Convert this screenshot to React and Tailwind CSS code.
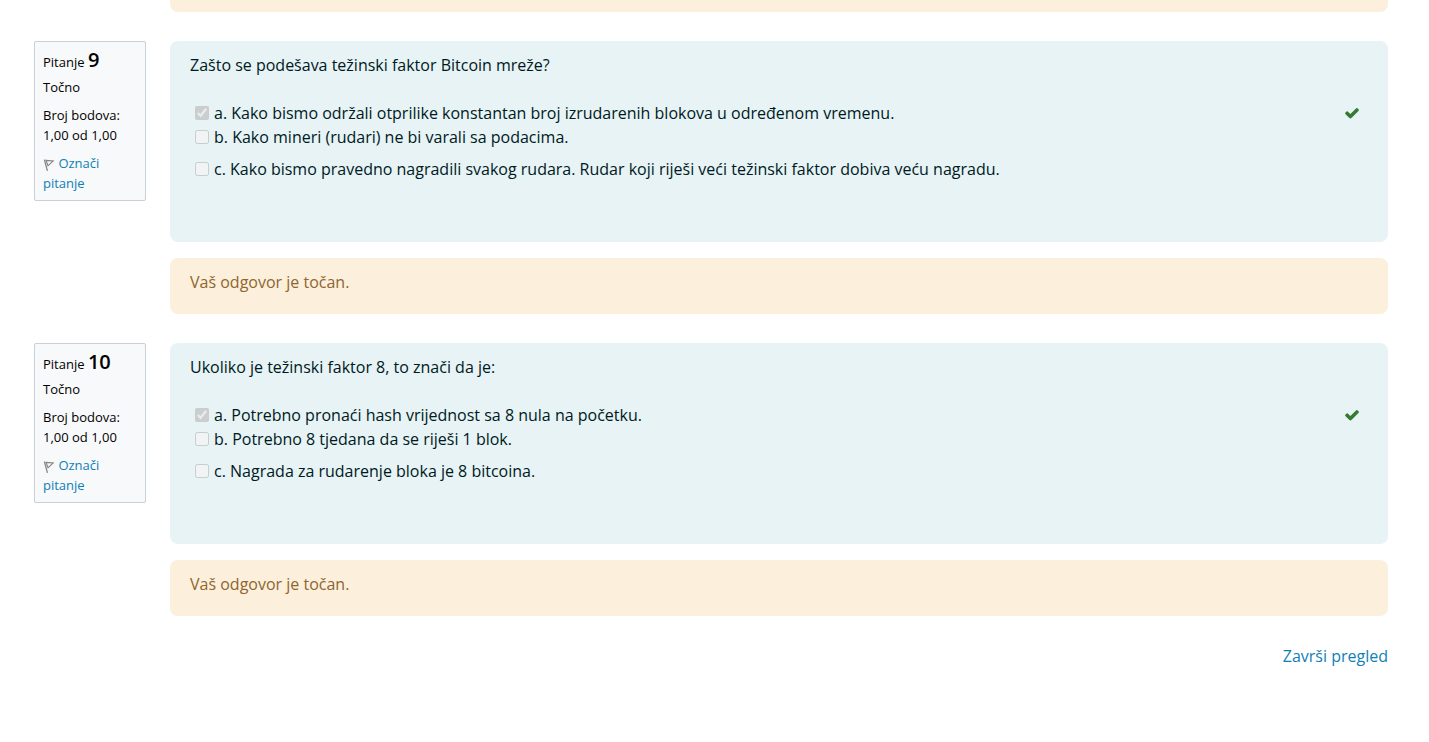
const questions = [
  {
    number: 9,
    text: 'Zašto se podešava težinski faktor Bitcoin mreže?',
    answers: [
      'Kako bismo održali otprilike konstantan broj izrudarenih blokova u određenom vremenu.',
      'Kako mineri (rudari) ne bi varali sa podacima.',
      'Kako bismo pravedno nagradili svakog rudara. Rudar koji riješi veći težinski faktor dobiva veću nagradu.',
    ],
  },
  {
    number: 10,
    text: 'Ukoliko je težinski faktor 8, to znači da je:',
    answers: [
      'Potrebno pronaći hash vrijednost sa 8 nula na početku.',
      'Potrebno 8 tjedana da se riješi 1 blok.',
      'Nagrada za rudarenje bloka je 8 bitcoina.',
    ],
  },
];

function FlagIcon() {
  return (
    <svg className="inline-block h-3 w-3 align-[-3px]" viewBox="0 0 12 12" fill="none" stroke="#858585" aria-hidden="true">
      <path d="M1.4 0.6 4.4 11.8" strokeWidth="1.3" />
      <path d="M3 1.4 10.2 2 5 6.8Z" strokeWidth="1.1" fill="#f4f4f4" />
    </svg>
  );
}

function CheckIcon() {
  return (
    <svg className="h-4 w-4" viewBox="0 0 1792 1792" fill="#357a32" role="img" aria-label="Točno">
      <path d="M1671 566q0 40-28 68l-724 724-136 136q-28 28-68 28t-68-28l-136-136-362-362q-28-28-28-68t28-68l136-136q28-28 68-28t68 28l294 295 656-657q28-28 68-28t68 28l136 136q28 28 28 68z" />
    </svg>
  );
}

function Info({ number }) {
  return (
    <aside className="w-28 shrink-0 rounded-[2px] border border-[#cad0d7] bg-[#f8f9fa] px-2 pt-[6px] pb-[7px] text-[13px] leading-5 text-black">
      <h3 className="leading-6">
        Pitanje <span className="text-xl leading-6 font-semibold">{number}</span>
      </h3>
      <div className="mt-[3px]">Točno</div>
      <div className="mt-2">Broj bodova: 1,00 od 1,00</div>
      <div className="mt-2">
        <a href="#oznaci" className="text-[#0f7fb5]">
          <FlagIcon /> Označi pitanje
        </a>
      </div>
    </aside>
  );
}

function Question({ number, text, answers }) {
  return (
    <section className="flex items-start gap-6">
      <Info number={number} />
      <div className="min-w-0 flex-1">
        <div className="rounded-lg bg-[#e7f3f5] px-5 pt-3 pb-[61px] text-[#001a1e]">
          <p>{text}</p>
          <div className="mt-6">
            {answers.map((answer, i) => {
              const id = `q${number}-${i}`;
              return (
                <div key={id} className="flex items-center last:mt-2">
                  <input id={id} type="checkbox" disabled defaultChecked={i === 0} className="mx-[5px] h-[14px] w-[14px] shrink-0" />
                  <label htmlFor={id} className="flex-1">
                    {'abc'[i]}. {answer}
                  </label>
                  {i === 0 && (
                    <span className="mr-2">
                      <CheckIcon />
                    </span>
                  )}
                </div>
              );
            })}
          </div>
        </div>
        <div className="mt-4 rounded-lg bg-[#fcefdc] px-5 pt-3 pb-5 text-[#8e662e]">Vaš odgovor je točan.</div>
      </div>
    </section>
  );
}

export default function App() {
  return (
    <main className="min-h-screen bg-white pr-[41px] pb-6 pl-[34px] font-['Open_Sans',sans-serif] text-base leading-6">
      <div className="ml-[136px] h-3 rounded-b-lg bg-[#fcefdc]" />
      <div className="mt-[29px] flex flex-col gap-[29px]">
        {questions.map((q) => (
          <Question key={q.number} {...q} />
        ))}
      </div>
      <div className="mt-7 text-right">
        <a href="#zavrsi" className="text-[#0f7fb5]">
          Završi pregled
        </a>
      </div>
    </main>
  );
}
